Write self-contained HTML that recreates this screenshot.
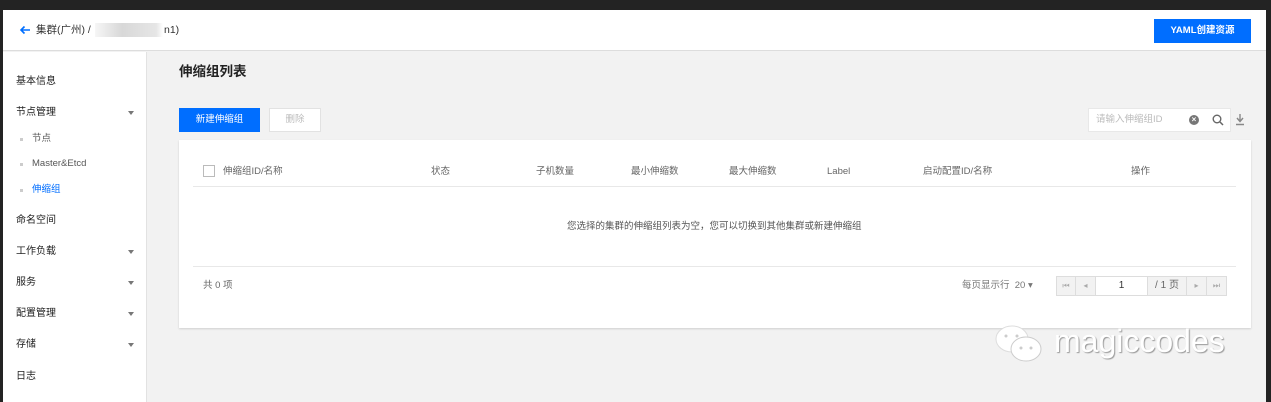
<!DOCTYPE html>
<html><head><meta charset="utf-8"><style>
*{margin:0;padding:0;box-sizing:border-box}
body{width:1271px;height:402px;overflow:hidden;background:#232323;font-family:"Liberation Sans","Noto Sans CJK SC",sans-serif;font-size:10px;color:#333;position:relative;line-height:1.2}
.abs{position:absolute}
#page{left:3px;top:10px;width:1263px;height:392px;background:#f2f2f2}
#hdr{left:3px;top:10px;width:1263px;height:41px;background:#fff;border-bottom:1px solid #ddd}
#side{left:3px;top:52px;width:144px;height:350px;background:#fff;border-right:1px solid #e2e2e2}
.nav{position:absolute;left:16px;font-size:10px;color:#222}
.sub{position:absolute;left:32px;font-size:9.5px;color:#555}
.dot{position:absolute;left:20px;width:3px;height:3px;background:#ccc}
.tri{position:absolute;left:128px;width:0;height:0;border-left:3px solid transparent;border-right:3px solid transparent;border-top:4px solid #777}
.btn{position:absolute;font-size:9.5px;text-align:center}
.th{position:absolute;top:166px;font-size:9.5px;color:#666}
.pg{position:absolute;top:276px;height:20px;border:1px solid #ddd;background:#f2f2f2;color:#aaa;font-size:8px;text-align:center;line-height:18px}
</style></head><body>
<div id="page" class="abs"></div>
<div id="hdr" class="abs"></div>
<svg class="abs" style="left:19px;top:25px" width="12" height="10" viewBox="0 0 12 10"><path d="M11 5H2M5.5 1.5L2 5l3.5 3.5" stroke="#006eff" stroke-width="1.6" fill="none"/></svg>
<div class="abs" style="left:36px;top:24px;font-size:10.5px;color:#333">集群(广州) /</div>
<div class="abs" style="left:95px;top:23px;width:68px;height:14px;background:linear-gradient(90deg,#f6f6f6,#d8d8d8 40%,#e6e6e6 90%,#fff)"></div>
<div class="abs" style="left:164px;top:24px;font-size:10.5px;color:#333">n1)</div>
<div class="btn" style="left:1154px;top:19px;width:97px;height:24px;background:#006eff;color:#fff;line-height:24px;font-weight:bold">YAML创建资源</div>
<div id="side" class="abs"></div>
<div class="nav" style="top:76px">基本信息</div>
<div class="nav" style="top:107px">节点管理</div><div class="tri" style="top:111px"></div>
<div class="dot" style="top:138px"></div><div class="sub" style="top:133px">节点</div>
<div class="dot" style="top:163px"></div><div class="sub" style="top:158px">Master&amp;Etcd</div>
<div class="dot" style="top:189px"></div><div class="sub" style="top:184px;color:#006eff">伸缩组</div>
<div class="nav" style="top:215px">命名空间</div>
<div class="nav" style="top:246px">工作负载</div><div class="tri" style="top:250px"></div>
<div class="nav" style="top:277px">服务</div><div class="tri" style="top:281px"></div>
<div class="nav" style="top:308px">配置管理</div><div class="tri" style="top:312px"></div>
<div class="nav" style="top:339px">存储</div><div class="tri" style="top:343px"></div>
<div class="nav" style="top:371px">日志</div>
<div class="abs" style="left:179px;top:64px;font-size:13.5px;font-weight:bold;color:#222">伸缩组列表</div>
<div class="btn" style="left:179px;top:108px;width:81px;height:24px;background:#006eff;color:#fff;line-height:24px">新建伸缩组</div>
<div class="btn" style="left:269px;top:108px;width:52px;height:24px;background:#fff;border:1px solid #e2e2e2;color:#bbb;line-height:22px">删除</div>
<div class="abs" style="left:1088px;top:108px;width:143px;height:24px;background:#fff;border:1px solid #e8e8e8"></div>
<div class="abs" style="left:1096px;top:114px;font-size:9.5px;color:#bbb">请输入伸缩组ID</div>
<div class="abs" style="left:1189px;top:115px;width:10px;height:10px;border-radius:50%;background:#777;color:#fff;font-size:8px;line-height:10px;text-align:center;font-weight:bold">×</div>
<svg class="abs" style="left:1212px;top:114px" width="12" height="12" viewBox="0 0 12 12"><circle cx="5" cy="5" r="3.8" stroke="#666" stroke-width="1.4" fill="none"/><path d="M8 8l3 3" stroke="#666" stroke-width="1.5"/></svg>
<svg class="abs" style="left:1235px;top:113px" width="10" height="13" viewBox="0 0 10 13"><path d="M5 1v7M2 5l3 3.5L8 5M1 11.5h8" stroke="#888" stroke-width="1.4" fill="none"/></svg>
<div class="abs" style="left:179px;top:140px;width:1072px;height:188px;background:#fff;box-shadow:0 1px 2px rgba(0,0,0,.15)"></div>
<div class="abs" style="left:203px;top:165px;width:12px;height:12px;border:1px solid #bbb;background:#fff"></div>
<div class="th" style="left:223px">伸缩组ID/名称</div>
<div class="th" style="left:431px">状态</div>
<div class="th" style="left:536px">子机数量</div>
<div class="th" style="left:631px">最小伸缩数</div>
<div class="th" style="left:729px">最大伸缩数</div>
<div class="th" style="left:827px">Label</div>
<div class="th" style="left:923px">启动配置ID/名称</div>
<div class="th" style="left:1131px">操作</div>
<div class="abs" style="left:193px;top:186px;width:1043px;height:1px;background:#e8e8e8"></div>
<div class="abs" style="left:567px;top:221px;font-size:9.5px;color:#555">您选择的集群的伸缩组列表为空，您可以切换到其他集群或新建伸缩组</div>
<div class="abs" style="left:193px;top:266px;width:1043px;height:1px;background:#e8e8e8"></div>
<div class="abs" style="left:203px;top:280px;font-size:9.5px;color:#666">共 0 项</div>
<div class="abs" style="left:962px;top:280px;font-size:9.5px;color:#777">每页显示行&nbsp; 20 ▾</div>
<div class="pg" style="left:1056px;width:20px">⏮</div>
<div class="pg" style="left:1075px;width:21px">◂</div>
<div class="pg" style="left:1095px;width:53px;background:#fff;color:#333;font-size:10px">1</div>
<div class="pg" style="left:1147px;width:40px;color:#666;font-size:10px">/ 1 页</div>
<div class="pg" style="left:1186px;width:21px">▸</div>
<div class="pg" style="left:1206px;width:21px">⏭</div>
<svg class="abs" style="left:992px;top:322px" width="60" height="46" viewBox="0 0 60 46"><ellipse cx="20" cy="17" rx="16" ry="13" fill="#fff" stroke="#ddd"/><ellipse cx="34" cy="27" rx="15" ry="12" fill="#fff" stroke="#ccc"/><circle cx="14" cy="14" r="1.5" fill="#ccc"/><circle cx="25" cy="14" r="1.5" fill="#ccc"/><circle cx="29" cy="26" r="1.5" fill="#ccc"/><circle cx="39" cy="26" r="1.5" fill="#ccc"/></svg>
<div class="abs" style="left:1054px;top:322px;font-size:32px;color:#fff;text-shadow:1px 1px 1px #999;letter-spacing:0px">magiccodes</div>
</body></html>
